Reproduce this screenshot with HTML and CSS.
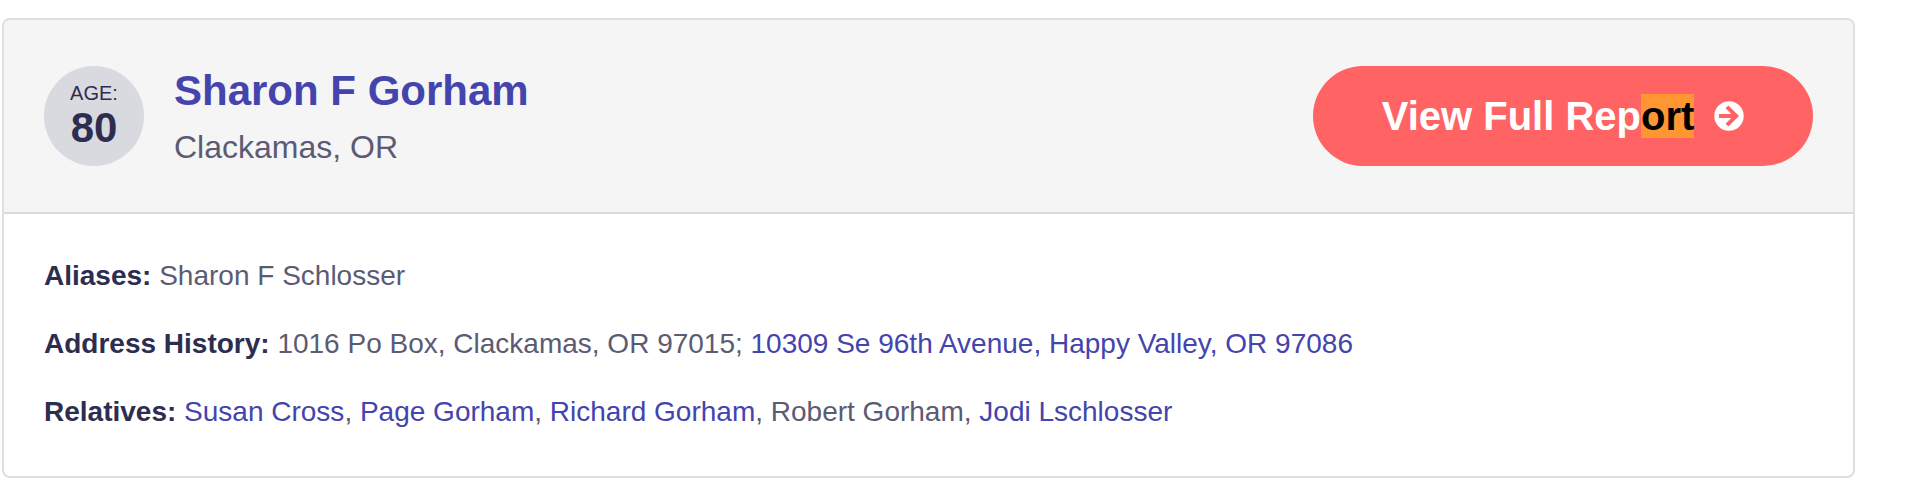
FILE: index.html
```html
<!DOCTYPE html>
<html lang="en">
<head>
<meta charset="utf-8">
<title>Sharon F Gorham</title>
<link rel="stylesheet" href="styles.css">
</head>
<body>
<article class="card">
  <header class="card-header">
    <div class="age"><span class="age-label">AGE:</span><span class="age-value">80</span></div>
    <div class="person">
      <h2 class="name">Sharon F Gorham</h2>
      <p class="location">Clackamas, OR</p>
    </div>
    <a class="report-button">
      <span class="report-text">View Full Rep<mark class="match">ort</mark></span>
      <svg class="arrow" viewBox="0 0 30 30" aria-hidden="true">
        <circle cx="15" cy="15" r="14.7" fill="#fff"/>
        <path d="M5 15H22M13 5.8L22.2 15L13 24.2" fill="none" stroke="#ff6363" stroke-width="4"/>
      </svg>
    </a>
  </header>
  <div class="details">
    <p class="row"><b class="label">Aliases:</b> Sharon F Schlosser</p>
    <p class="row"><b class="label">Address History:</b> 1016 Po Box, Clackamas, OR 97015; <a class="link">10309 Se 96th Avenue, Happy Valley, OR 97086</a></p>
    <p class="row"><b class="label">Relatives:</b> <a class="link">Susan Cross</a>, <a class="link">Page Gorham</a>, <a class="link">Richard Gorham</a>, Robert Gorham, <a class="link">Jodi Lschlosser</a></p>
  </div>
</article>
</body>
</html>
```
FILE: styles.css
```css
* { box-sizing: border-box; }
body {
  margin: 0;
  padding: 18px 55px 18px 2px;
  background: #fff;
  color: #5b5b73;
  font-family: "Liberation Sans", Arial, sans-serif;
}
.card {
  height: 460px;
  border: 2px solid #dedee3;
  border-radius: 8px;
  overflow: hidden;
}
.card-header {
  display: flex;
  align-items: center;
  height: 194px;
  padding: 0 40px;
  background: #f5f5f6;
  border-bottom: 2px solid #d9d9df;
}
.age {
  display: flex;
  flex-direction: column;
  align-items: center;
  width: 100px;
  height: 100px;
  padding-top: 15px;
  border-radius: 50%;
  background: #d9d9e0;
  color: #2d2d4f;
}
.age-label { font-size: 20px; line-height: 24px; }
.age-value { font-size: 42px; font-weight: bold; line-height: 46px; }
.person { margin-left: 30px; padding-top: 2px; }
.name {
  margin: 0;
  color: #4444ad;
  font-size: 42px;
  line-height: 52px;
}
.location { margin: 0; padding-top: 8px; font-size: 32px; line-height: 44px; }
.report-button {
  display: flex;
  align-items: center;
  justify-content: center;
  gap: 20px;
  width: 500px;
  height: 100px;
  margin-left: auto;
  border-radius: 50px;
  background: #ff6363;
  color: #fff;
  font-size: 40px;
  font-weight: bold;
}
.match { background: #ff9632; color: #000; }
.arrow { width: 30px; height: 30px; }
.details { padding: 40px; font-size: 28px; line-height: 44px; }
.row { margin: 0 0 24px; }
.label { color: #2d2d4f; }
.link { color: #4444ad; }
```
